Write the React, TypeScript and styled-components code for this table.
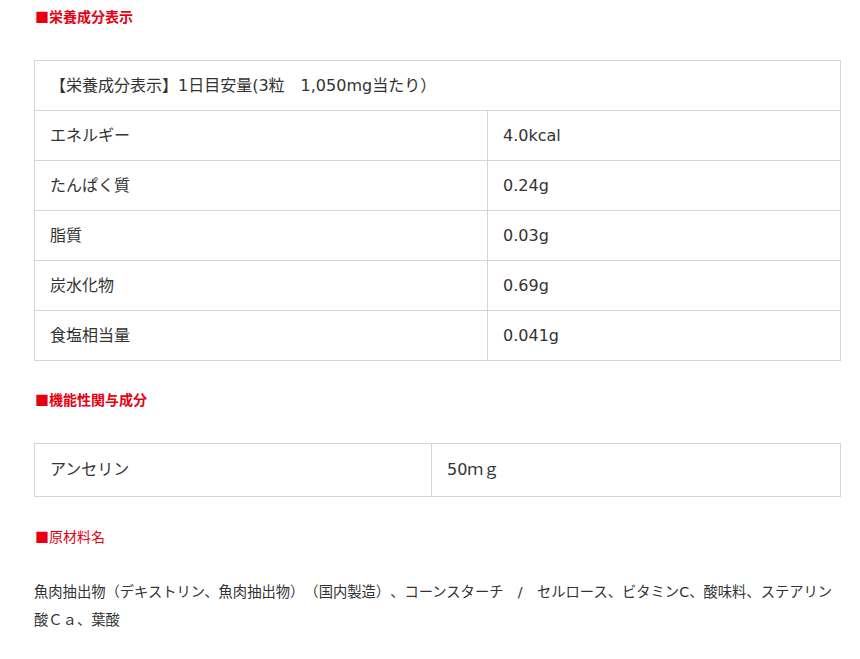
import styled, { createGlobalStyle } from 'styled-components';

const GlobalStyle = createGlobalStyle`
	body {
		margin: 0;
		background: #fff;
		font-family: "DejaVu Sans", "Noto Sans CJK JP", sans-serif;
		color: #333;
		text-spacing-trim: space-all;
	}
`;

const nutrition = [
	{ label: 'エネルギー', value: '4.0kcal' },
	{ label: 'たんぱく質', value: '0.24g' },
	{ label: '脂質', value: '0.03g' },
	{ label: '炭水化物', value: '0.69g' },
	{ label: '食塩相当量', value: '0.041g' },
];

export default function App() {
	return (
		<>
			<GlobalStyle />
			<Page>
				<Heading $bold $gap={6}>■栄養成分表示</Heading>
				<Table $gap={34}>
					<colgroup>
						<col style={{ width: 453 }} />
						<col />
					</colgroup>
					<tbody>
						<tr>
							<Cell colSpan={2}>【栄養成分表示】1日目安量(3粒　1,050mg当たり）</Cell>
						</tr>
						{nutrition.map((row) => (
							<tr key={row.label}>
								<Cell>{row.label}</Cell>
								<Cell>{row.value}</Cell>
							</tr>
						))}
					</tbody>
				</Table>

				<Heading $bold $gap={28}>■機能性関与成分</Heading>
				<Table $gap={34}>
					<colgroup>
						<col style={{ width: 397 }} />
						<col />
					</colgroup>
					<tbody>
						<tr>
							<Cell $tall>アンセリン</Cell>
							<Cell $tall>50ｍｇ</Cell>
						</tr>
					</tbody>
				</Table>

				<Heading $gap={29}>■原材料名</Heading>
				<Body>
					魚肉抽出物（デキストリン、魚肉抽出物）（国内製造）、コーンスターチ　/　セルロース、ビタミンC、酸味料、ステアリン
					<br />
					酸Ｃａ、葉酸
				</Body>
			</Page>
		</>
	);
}

const Page = styled.div`
	width: 807px;
	padding: 0 19px 20px 34px;
`;

const Heading = styled.h3<{ $bold?: boolean; $gap: number }>`
	margin: ${(p) => p.$gap}px 0 0 1px;
	font-family: "Noto Sans CJK JP", sans-serif;
	font-size: 14px;
	line-height: 20px;
	color: #e60012;
	font-weight: ${(p) => (p.$bold ? 700 : 400)};
`;

const Table = styled.table<{ $gap: number }>`
	width: 100%;
	margin-top: ${(p) => p.$gap}px;
	border-collapse: collapse;
	table-layout: fixed;
`;

const Cell = styled.td<{ $tall?: boolean }>`
	border: 1px solid #d6d6d6;
	height: ${(p) => (p.$tall ? 53 : 50)}px;
	padding: 0 15px;
	box-sizing: border-box;
	font-size: 16px;
	line-height: 22px;
	vertical-align: middle;
	color: #333;
`;

const Body = styled.p`
	margin: 32px -30px 0 0;
	font-size: 14.3px;
	line-height: 28px;
	color: #333;
	white-space: nowrap;
`;
